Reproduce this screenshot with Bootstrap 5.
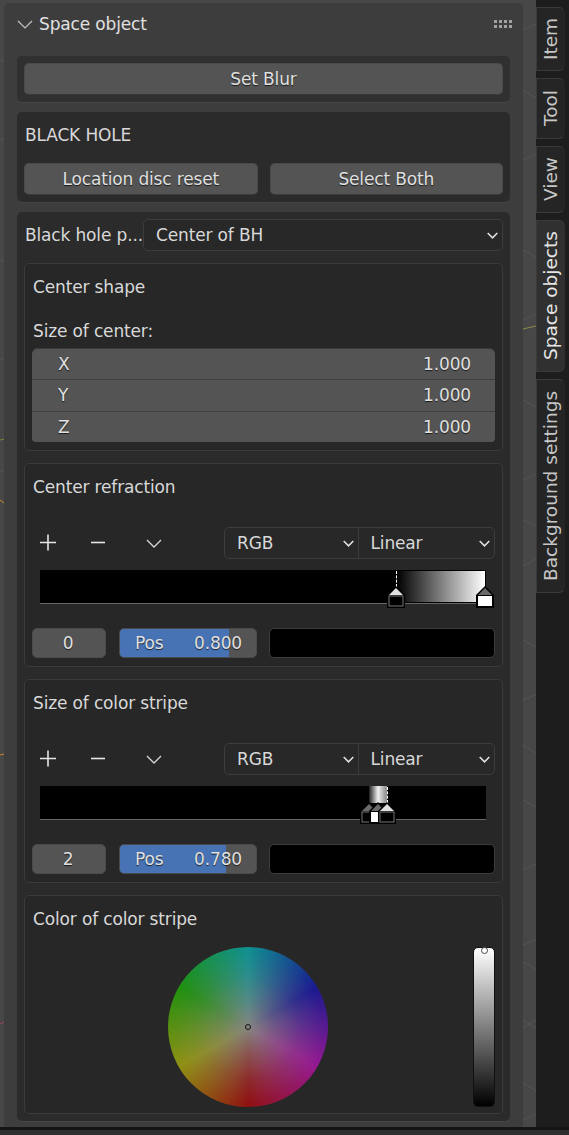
<!DOCTYPE html>
<html lang="en">
<head>
<meta charset="utf-8">
<title>Space object</title>
<link href="https://cdn.jsdelivr.net/npm/bootstrap@5.3.0/dist/css/bootstrap.min.css" rel="stylesheet">
<style>
html,body{margin:0;padding:0;background:#2f2f2f}
body{width:569px;height:1135px;overflow:hidden;font-family:"DejaVu Sans","Liberation Sans",sans-serif;font-size:17px;letter-spacing:-.15px;color:#d9d9d9;line-height:1.2}
.bl-stage{position:relative;height:1127px;background:#474747}
.bl-lines{position:absolute;inset:0;width:569px;height:1127px}
.bl-main{position:relative;height:1127px}
.bl-panel{width:519px;margin:3px 0 0 4px;height:1124px;background:#3d3d3d;border-radius:5px 5px 0 0;padding:0 13px;flex:none}
.bl-head{height:43px;margin:0 -13px 10px;padding:0 10px 0 13px;color:#e0e0e0}
.bl-chev{margin-right:6px}
.bl-tabs{position:absolute;right:0;top:0;bottom:0;width:33px;background:#1d1d1d;padding-top:7px}
.bl-tab{writing-mode:vertical-rl;transform:rotate(180deg);width:29px;border:1px solid #3a3a3a;border-left-color:transparent;border-radius:6px 0 0 6px;background:#252525;color:#c6c6c6;font-size:18.5px;letter-spacing:0;text-align:center;line-height:27px;margin-bottom:7px;white-space:nowrap}
.bl-tab-on{background:#303030;color:#e6e6e6}
.bl-box{background:#2b2b2b;border-radius:5px;padding:7px;margin-bottom:10px;box-shadow:0 1px 0 #454545}
.bl-box1{background:#303030}
.bl-label{height:32px;padding-left:1px;margin-bottom:12px}
.bl-btnrow{gap:12px}
.btn.bl-btn{--bs-btn-padding-y:0;--bs-btn-padding-x:0;height:32px;background:#545454;border:1px solid #4a4a4a;border-bottom-color:#3a3a3a;color:#e0e0e0;font-size:17px;letter-spacing:-.15px;border-radius:5px;text-shadow:0 1px 1px rgba(0,0,0,.7);line-height:30px;flex:1 1 0}
.btn.bl-sel{--bs-btn-padding-y:0;height:32px;background:#282828;border:1px solid #3d3d3d;color:#d9d9d9;font-size:17px;letter-spacing:-.15px;border-radius:5px;padding:0 4px 0 12px;line-height:30px;text-align:left}
.bl-pname{width:119px;flex:none;white-space:nowrap;padding-left:1px}
.bl-sub.card{--bs-card-bg:#272727;--bs-card-border-color:#3b3b3b;--bs-card-border-radius:5px;--bs-card-inner-border-radius:4px;padding:6px 7px 8px;margin-top:12px;color:#d9d9d9}
.bl-sub.bl-sublast{padding-bottom:6px}
.bl-title{height:32px;padding:2px 0 0 1px}
.bl-title2{margin:12px 0 2px}
.bl-xyz.list-group{--bs-list-group-bg:#545454;--bs-list-group-color:#e0e0e0;--bs-list-group-border-color:#3f3f3f;--bs-list-group-border-radius:5px;--bs-list-group-item-padding-x:26px;--bs-list-group-item-padding-y:0;height:94px;text-shadow:0 1px 1px rgba(0,0,0,.7)}
.bl-xyz .list-group-item{height:32px;line-height:30px;padding-right:24px;border-left:0;border-right:0}
.bl-xyz .list-group-item:first-child{height:31px;border-top:0}
.bl-xyz .list-group-item:last-child{height:31px;border-bottom:0}
.bl-tool{height:32px;margin-top:25px;color:#e0e0e0}
.bl-tico{width:32px;height:32px;flex:none}
.bl-tgap1{width:18px;flex:none}
.bl-tgap2{width:24px;flex:none}
.btn-group.bl-grp{width:271px;margin-left:auto}
.bl-grp .btn.bl-sel{flex:none;width:134.5px}
.bl-grp .btn.bl-sel+.btn.bl-sel{width:137.5px}
.bl-ramp{position:relative;margin:11px 9px 0 8px;height:34px;background:#000;border-bottom:1px solid #666}
.bl-grad{position:absolute;top:0;bottom:0}
.bl-gradwide{left:356px;width:90px;border:1px solid #000;background:linear-gradient(90deg,#000,#fff)}
.bl-gradthin{left:329px;width:18px;bottom:16px;background:linear-gradient(90deg,#222,#f0f0f0 50%,#999 90%)}
.bl-dash{position:absolute;top:1px;height:16px;width:0;border-left:1px dashed #fff}
.bl-hnd{position:absolute;top:16px;width:18px;height:22px}
.bl-fields{margin-top:24px;height:30px;gap:12px}
.bl-fld{height:30px;background:#545454;border:1px solid #4a4a4a;border-radius:5px;color:#e0e0e0;line-height:28px;text-align:center;text-shadow:0 1px 1px rgba(0,0,0,.7)}
.bl-idx{width:74px;flex:none;margin-right:1px;padding-right:2px}
.bl-pos{position:relative;width:138px;flex:none;overflow:hidden;padding:0 14px 0 15px}
.bl-posfill{position:absolute;left:0;top:0;bottom:0;background:#4772b3}
.bl-posrow{position:relative}
.bl-swatch{flex:1 1 0;height:30px;background:#000;border:1px solid #3d3d3d;border-radius:5px}
.bl-wheelrow{margin-top:13px;height:160px}
.bl-wheel{width:160px;height:160px;margin-left:136px;border-radius:50%;position:relative;background:radial-gradient(circle closest-side,#858580 0%,rgba(133,133,128,.6) 30%,rgba(133,133,128,.22) 65%,rgba(133,133,128,0) 95%),conic-gradient(from 0deg,#119090,#1a1a90 60deg,#961a90 120deg,#901212 180deg,#909015 240deg,#209010 300deg,#119090 360deg)}
.bl-wdot{position:absolute;left:77px;top:77px;width:6px;height:6px;border:1px solid #111;border-radius:50%}
.bl-val{position:relative;width:22px;height:160px;margin-left:auto;border-radius:5px;border:1px solid #111;background:linear-gradient(#fff,#000)}
.bl-vdot{position:absolute;left:7px;top:-1px;width:7px;height:7px;border:1px solid #444;border-radius:50%;background:#fff}
.bl-foot{height:8px;background:#2f2f2f;border-top:3px solid #151515}
</style>
</head>
<body>
<div class="bl-stage">
  <svg class="bl-lines" viewBox="0 0 569 1127" fill="none" stroke="#545454" stroke-width="1">
    <path d="M523 30l13-6M523 90l13 8M523 160l13-6M523 250l13 7M523 320l13-6M523 400l13 7M523 480l13-6M523 520l13 6M523 566l13-7M523 640l13 7M523 700l13-5M523 745l13 8M523 800l13 7M523 870l13-6M523 945l13-5M523 962l13 7M523 1020l13 8M523 1028l13-8M523 1083l13 8M523 1120l13-6"/>
    <path d="M0 60l4 2M0 140l4-2M0 260l4 2M0 360l4-2M0 470l4 2"/>
    <path d="M0 500l4 3" stroke="#c98a2e"/>
    <path d="M0 1024l4-2" stroke="#a04a5a"/>
    <path d="M0 755l4-1" stroke="#c98a2e"/>
    <path d="M523 329l13-3" stroke="#8a8a4a"/>
    <path d="M0 440l4-1" stroke="#7c8a3a"/>
  </svg>
  <div class="bl-main d-flex">
    <div class="bl-panel">
      <div class="bl-head d-flex align-items-center">
        <svg class="bl-chev" width="16" height="9" viewBox="0 0 16 9" fill="none" stroke="#c4c4c4" stroke-width="1.2"><path d="M1 1l7 7 7-7"/></svg>
        <span class="flex-grow-1">Space object</span>
        <svg width="19" height="9" viewBox="0 0 19 9" fill="#a0a0a0"><rect x="0" y="0" width="3" height="3"/><rect x="5" y="0" width="3" height="3"/><rect x="10" y="0" width="3" height="3"/><rect x="15" y="0" width="3" height="3"/><rect x="0" y="5" width="3" height="3"/><rect x="5" y="5" width="3" height="3"/><rect x="10" y="5" width="3" height="3"/><rect x="15" y="5" width="3" height="3"/></svg>
      </div>

      <div class="bl-box bl-box1 d-flex">
        <button type="button" class="btn bl-btn">Set Blur</button>
      </div>

      <div class="bl-box">
        <div class="bl-label d-flex align-items-center">BLACK HOLE</div>
        <div class="bl-btnrow d-flex">
          <button type="button" class="btn bl-btn">Location disc reset</button>
          <button type="button" class="btn bl-btn">Select Both</button>
        </div>
      </div>

      <div class="bl-box mb-0">
        <div class="d-flex align-items-center">
          <div class="bl-pname">Black hole p...</div>
          <button type="button" class="btn bl-sel flex-grow-1 d-flex align-items-center justify-content-between">Center of BH
            <svg width="11" height="7" viewBox="0 0 11 7" fill="none" stroke="#e0e0e0" stroke-width="1.6"><path d="M.7 1l4.8 4.8L10.3 1"/></svg>
          </button>
        </div>

        <div class="card bl-sub">
          <div class="bl-title d-flex align-items-center">Center shape</div>
          <div class="bl-title bl-title2 d-flex align-items-center">Size of center:</div>
          <ul class="list-group bl-xyz">
            <li class="list-group-item d-flex justify-content-between"><span>X</span><span>1.000</span></li>
            <li class="list-group-item d-flex justify-content-between"><span>Y</span><span>1.000</span></li>
            <li class="list-group-item d-flex justify-content-between"><span>Z</span><span>1.000</span></li>
          </ul>
        </div>

        <div class="card bl-sub">
          <div class="bl-title d-flex align-items-center">Center refraction</div>
          <div class="bl-tool d-flex align-items-center">
            <svg class="bl-tico" viewBox="0 0 32 32" fill="none" stroke="#e6e6e6" stroke-width="1.6"><path d="M16 7.5v16M8 15.5h16"/></svg>
            <div class="bl-tgap1"></div>
            <svg class="bl-tico" viewBox="0 0 32 32" fill="none" stroke="#e6e6e6" stroke-width="1.6"><path d="M9 15.5h14"/></svg>
            <div class="bl-tgap2"></div>
            <svg class="bl-tico" viewBox="0 0 32 32" fill="none" stroke="#d8d8d8" stroke-width="1.3"><path d="M9 13l7 7 7-7"/></svg>
            <div class="btn-group bl-grp">
              <button type="button" class="btn bl-sel d-flex align-items-center justify-content-between">RGB<svg width="11" height="7" viewBox="0 0 11 7" fill="none" stroke="#e0e0e0" stroke-width="1.6"><path d="M.7 1l4.8 4.8L10.3 1"/></svg></button>
              <button type="button" class="btn bl-sel d-flex align-items-center justify-content-between">Linear<svg width="11" height="7" viewBox="0 0 11 7" fill="none" stroke="#e0e0e0" stroke-width="1.6"><path d="M.7 1l4.8 4.8L10.3 1"/></svg></button>
            </div>
          </div>
          <div class="bl-ramp">
            <div class="bl-grad bl-gradwide"></div>
            <div class="bl-dash" style="left:356px"></div>
            <svg class="bl-hnd" style="left:347px" viewBox="0 0 18 22"><path d="M9 0l9 9v13H0V9z" fill="#000"/><path d="M9 2l7 7H2z" fill="#e0e0e0"/><rect x="2" y="10" width="14" height="10" fill="#000" stroke="#777" stroke-width="1"/></svg>
            <svg class="bl-hnd" style="left:436px" viewBox="0 0 18 22"><path d="M9 0l9 9v13H0V9z" fill="#000"/><path d="M9 2l7 7H2z" fill="#6a6a6a"/><rect x="2" y="10" width="14" height="10" fill="#fff"/></svg>
          </div>
          <div class="bl-fields d-flex">
            <div class="bl-fld bl-idx">0</div>
            <div class="bl-fld bl-pos"><div class="bl-posfill" style="width:109px"></div><div class="bl-posrow d-flex justify-content-between"><span>Pos</span><span>0.800</span></div></div>
            <div class="bl-swatch"></div>
          </div>
        </div>

        <div class="card bl-sub">
          <div class="bl-title d-flex align-items-center">Size of color stripe</div>
          <div class="bl-tool d-flex align-items-center">
            <svg class="bl-tico" viewBox="0 0 32 32" fill="none" stroke="#e6e6e6" stroke-width="1.6"><path d="M16 7.5v16M8 15.5h16"/></svg>
            <div class="bl-tgap1"></div>
            <svg class="bl-tico" viewBox="0 0 32 32" fill="none" stroke="#e6e6e6" stroke-width="1.6"><path d="M9 15.5h14"/></svg>
            <div class="bl-tgap2"></div>
            <svg class="bl-tico" viewBox="0 0 32 32" fill="none" stroke="#d8d8d8" stroke-width="1.3"><path d="M9 13l7 7 7-7"/></svg>
            <div class="btn-group bl-grp">
              <button type="button" class="btn bl-sel d-flex align-items-center justify-content-between">RGB<svg width="11" height="7" viewBox="0 0 11 7" fill="none" stroke="#e0e0e0" stroke-width="1.6"><path d="M.7 1l4.8 4.8L10.3 1"/></svg></button>
              <button type="button" class="btn bl-sel d-flex align-items-center justify-content-between">Linear<svg width="11" height="7" viewBox="0 0 11 7" fill="none" stroke="#e0e0e0" stroke-width="1.6"><path d="M.7 1l4.8 4.8L10.3 1"/></svg></button>
            </div>
          </div>
          <div class="bl-ramp">
            <div class="bl-grad bl-gradthin"></div>
            <div class="bl-dash" style="left:347px"></div>
            <svg class="bl-hnd" style="left:320px" viewBox="0 0 18 22"><path d="M9 0l9 9v13H0V9z" fill="#000"/><path d="M9 2l7 7H2z" fill="#6a6a6a"/><rect x="2" y="10" width="14" height="10" fill="#000" stroke="#777" stroke-width="1"/></svg>
            <svg class="bl-hnd" style="left:329px" viewBox="0 0 18 22"><path d="M9 0l9 9v13H0V9z" fill="#000"/><path d="M9 2l7 7H2z" fill="#6a6a6a"/><rect x="2" y="10" width="14" height="10" fill="#fff"/></svg>
            <svg class="bl-hnd" style="left:338px" viewBox="0 0 18 22"><path d="M9 0l9 9v13H0V9z" fill="#000"/><path d="M9 2l7 7H2z" fill="#e0e0e0"/><rect x="2" y="10" width="14" height="10" fill="#000" stroke="#777" stroke-width="1"/></svg>
          </div>
          <div class="bl-fields d-flex">
            <div class="bl-fld bl-idx">2</div>
            <div class="bl-fld bl-pos"><div class="bl-posfill" style="width:106px"></div><div class="bl-posrow d-flex justify-content-between"><span>Pos</span><span>0.780</span></div></div>
            <div class="bl-swatch"></div>
          </div>
        </div>

        <div class="card bl-sub bl-sublast">
          <div class="bl-title d-flex align-items-center">Color of color stripe</div>
          <div class="bl-wheelrow d-flex">
            <div class="bl-wheel"><div class="bl-wdot"></div></div>
            <div class="bl-val"><div class="bl-vdot"></div></div>
          </div>
        </div>
      </div>
    </div>

    <div class="bl-tabs">
      <div class="bl-tab" style="height:64px">Item</div>
      <div class="bl-tab" style="height:61px">Tool</div>
      <div class="bl-tab" style="height:67px">View</div>
      <div class="bl-tab bl-tab-on" style="height:152px">Space objects</div>
      <div class="bl-tab" style="height:214px">Background settings</div>
    </div>
  </div>
</div>
<div class="bl-foot"></div>
<script src="https://cdn.jsdelivr.net/npm/bootstrap@5.3.0/dist/js/bootstrap.bundle.min.js"></script>
</body>
</html>
